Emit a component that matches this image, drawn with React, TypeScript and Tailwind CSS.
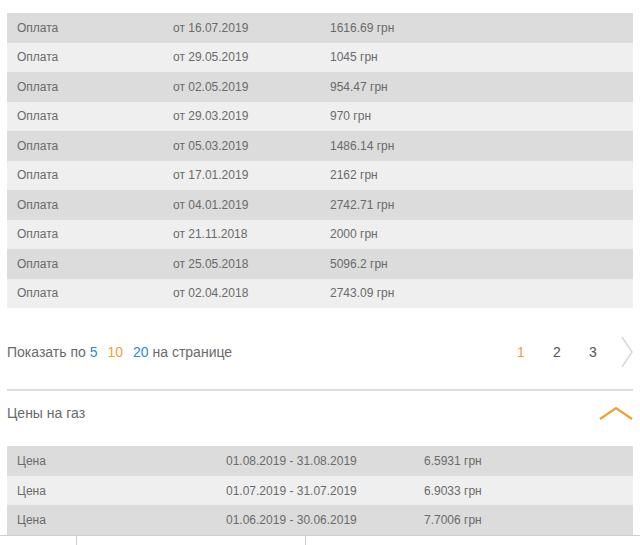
import React from 'react';

const payments = [
  { date: 'от 16.07.2019', sum: '1616.69 грн' },
  { date: 'от 29.05.2019', sum: '1045 грн' },
  { date: 'от 02.05.2019', sum: '954.47 грн' },
  { date: 'от 29.03.2019', sum: '970 грн' },
  { date: 'от 05.03.2019', sum: '1486.14 грн' },
  { date: 'от 17.01.2019', sum: '2162 грн' },
  { date: 'от 04.01.2019', sum: '2742.71 грн' },
  { date: 'от 21.11.2018', sum: '2000 грн' },
  { date: 'от 25.05.2018', sum: '5096.2 грн' },
  { date: 'от 02.04.2018', sum: '2743.09 грн' },
];

const prices = [
  { period: '01.08.2019 - 31.08.2019', price: '6.5931 грн' },
  { period: '01.07.2019 - 31.07.2019', price: '6.9033 грн' },
  { period: '01.06.2019 - 30.06.2019', price: '7.7006 грн' },
];

export default function App() {
  return (
    <div className="w-[640px] h-[545px] overflow-hidden bg-white text-[#6a6a6a] font-[family-name:'Liberation_Sans',Arial,sans-serif]">
      <div className="px-[7px] pt-[13px]">
        {/* Payments */}
        <div className="flex flex-col">
          {payments.map((p, i) => (
            <div
              key={i}
              className={`flex items-center h-[29.5px] text-[12px] ${i % 2 === 0 ? 'bg-[#dcdcdc]' : 'bg-[#efefef]'}`}
            >
              <span className="w-[166px] pl-[10px]">Оплата</span>
              <span className="w-[157px]">{p.date}</span>
              <span>{p.sum}</span>
            </div>
          ))}
        </div>

        {/* Pagination */}
        <div className="flex items-center justify-between h-[81px] pt-[7px] text-[14px]">
          <div>
            Показать по <span className="text-[#2a8ccf]">5</span>
            <span className="text-[#f0a030] ml-[10px]">10</span>
            <span className="text-[#2a8ccf] ml-[10px]">20</span> на странице
          </div>
          <div className="flex items-center">
            <span className="text-[#f0a030] w-[36px]">1</span>
            <span className="text-[#555] w-[36px]">2</span>
            <span className="text-[#555] w-[32px]">3</span>
            <svg width="12" height="32" viewBox="0 0 12 32">
              <path d="M1 1 L11 16 L1 31" fill="none" stroke="#d8d8d8" strokeWidth="1.5" />
            </svg>
          </div>
        </div>

        <div className="h-[2px] bg-[#dedede]" />

        {/* Gas prices header */}
        <div className="flex items-center justify-between h-[44px] mb-[11px] text-[14px]">
          <span>Цены на газ</span>
          <svg width="34" height="16" viewBox="0 0 34 16">
            <path d="M1 14 L17 3 L33 14" fill="none" stroke="#f0a030" strokeWidth="2.2" />
          </svg>
        </div>

        <div className="flex flex-col">
          {prices.map((p, i) => (
            <div
              key={i}
              className={`flex items-center h-[29.7px] text-[12px] ${i % 2 === 0 ? 'bg-[#dcdcdc]' : 'bg-[#efefef]'}`}
            >
              <span className="w-[219px] pl-[10px]">Цена</span>
              <span className="w-[198px]">{p.period}</span>
              <span>{p.price}</span>
            </div>
          ))}
        </div>
      </div>

      {/* Bottom strip */}
      <div className="border-t border-[#d0d0d0] flex h-[12px]">
        <div className="w-[76px]" />
        <div className="w-[229px] border-l border-[#ccc]" />
        <div className="border-l border-[#ccc]" />
      </div>
    </div>
  );
}
